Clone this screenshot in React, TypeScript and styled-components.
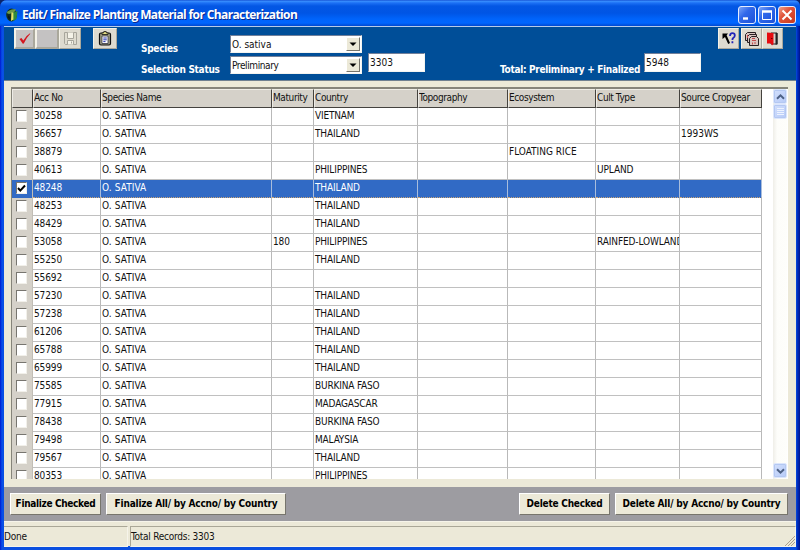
import React from "react";
import styled, { createGlobalStyle, css } from "styled-components";

const GlobalStyle = createGlobalStyle`
  * { box-sizing: border-box; }
  body { margin: 0; background: #0a246a; }
`;

const Window = styled.div`
  width: 800px;
  height: 550px;
  display: flex;
  flex-direction: column;
  overflow: hidden;
  background: linear-gradient(90deg, #0019cf 0, #0850ea 2px, #0a4fe0 4px, #0a4fe0 796px, #0034c8 797px, #00138c 800px);
  border-radius: 7px 6px 0 0;
  font-family: "DejaVu Sans Condensed", "DejaVu Sans", sans-serif;
  font-stretch: condensed;
  font-size: 10px;
  color: #111;
  white-space: nowrap;
`;

const TitleBar = styled.header`
  height: 26px;
  flex: none;
  display: flex;
  align-items: center;
  padding: 3px 4px 0 6px;
  background: linear-gradient(180deg, #0a3fc8 0, #3c92ff 1px, #1c70f5 3px, #0457e4 6px, #0055e5 13px, #0064fb 19px, #0066ff 23px, #0048d0 26px);
`;

const Title = styled.h1`
  margin: 0 auto 0 4px;
  font: bold 12px/16px "Open Sans", "Noto Sans", sans-serif;
  letter-spacing: -0.62px;
  color: #fff;
  text-shadow: 1px 1px 0 #0a2a90;
`;

const CaptionButton = styled.button<{ $close?: boolean }>`
  width: 18px;
  height: 18px;
  margin-left: 2px;
  padding: 0;
  border: 1px solid #e4ecff;
  border-radius: 3px;
  display: grid;
  place-items: center;
  background: ${(p) =>
    p.$close
      ? "linear-gradient(135deg, #f0a088, #e0533a 40%, #c8391c)"
      : "linear-gradient(135deg, #7ba4f8, #3068ea 40%, #1c50d8)"};
`;

const Client = styled.main`
  flex: 1;
  min-height: 0;
  margin: 0 4px 4px;
  display: flex;
  flex-direction: column;
  background: #ece9d8;
`;

const Toolbar = styled.section`
  height: 55px;
  flex: none;
  display: flex;
  align-items: flex-start;
  border-top: 1px solid #b8cce8;
  border-bottom: 1px solid #708090;
  background: #004e98;
`;

const ToolGroup = styled.div<{ $ml: number }>`
  display: flex;
  margin: 1px 0 0 ${(p) => p.$ml}px;
`;

const ToolButton = styled.button<{ $w?: number; $grey?: boolean; $gap?: number }>`
  width: ${(p) => p.$w ?? 22}px;
  height: 21px;
  margin-left: ${(p) => p.$gap ?? 0}px;
  padding: 0;
  display: grid;
  place-items: center;
  border: ${(p) => (p.$grey ? 2 : 1)}px solid;
  border-color: #f4f2e8 #aaa89c #aaa89c #f4f2e8;
  background: ${(p) => (p.$grey ? "#c4c2c2" : "#dedbd0")};
`;

const FieldGrid = styled.div`
  display: grid;
  grid-template-columns: 89px 132px;
  grid-template-rows: 18px 18px;
  row-gap: 3px;
  margin: 8px 0 0 24px;
`;

const Label = styled.label`
  padding-top: 6px;
  font-weight: bold;
  line-height: 16px;
  letter-spacing: -0.28px;
  color: #fff;
`;

const sunken = css`
  border: 1px solid;
  border-color: #72809a #f4f4f0 #f4f4f0 #72809a;
  background: #fff;
`;

const Select = styled.div`
  ${sunken}
  height: 18px;
  display: flex;
  justify-content: space-between;
  padding: 1px 1px 1px 1px;
  line-height: 15px;
`;

const SelectText = styled.span<{ $ls: number }>`
  letter-spacing: ${(p) => p.$ls}px;
`;

const DropButton = styled.span`
  width: 14px;
  height: 14px;
  display: grid;
  place-items: center;
  background: #ece9d8;
  border: 1px solid;
  border-color: #fff #77756c #77756c #fff;
`;

const NumberBox = styled.div<{ $ml: number }>`
  ${sunken}
  width: 57px;
  height: 19px;
  margin: 26px 0 0 ${(p) => p.$ml}px;
  padding-left: 1px;
  line-height: 17px;
`;

const TotalLabel = styled.div`
  width: 144px;
  margin: 35px 0 0 75px;
  font-weight: bold;
  line-height: 16px;
  letter-spacing: -0.3px;
  color: #fff;
`;

const RightSide = styled.div`
  display: flex;
`;

const GridFrame = styled.section`
  height: 392px;
  flex: none;
  margin: 6px 8px 0 7px;
  display: flex;
  overflow: hidden;
  border: 1px solid;
  border-width: 2px 0 0 1px;
  border-color: #86847a #fff #fff #86847a;
  background: #fff;
`;

const Table = styled.div`
  width: 750px;
  flex: none;
`;

const Row = styled.div<{ $selected?: boolean; $head?: boolean }>`
  display: grid;
  grid-template-columns: 21px 68px 171px 42px 104px 90px 88px 84px 82px;
  height: ${(p) => (p.$head ? 19 : 18)}px;
  ${(p) =>
    p.$selected &&
    css`
      background: #316ac5;
      color: #fff;
      box-shadow: 0 -1px 0 #77777a;
    `}
`;

const HeadCell = styled.div`
  line-height: 16px;
  letter-spacing: -0.4px;
  background: #d5d1c9;
  border: 1px solid;
  border-color: #eeece6 #44423e #44423e #eeece6;
  overflow: hidden;
`;

const Cell = styled.div<{ $selected?: boolean; $ls: number }>`
  padding: 0 0 0 1px;
  overflow: hidden;
  line-height: 15px;
  letter-spacing: ${(p) => p.$ls}px;
  border-right: 1px solid ${(p) => (p.$selected ? "#a9bddc" : "#b9b9b9")};
  border-bottom: 1px ${(p) => (p.$selected ? "dotted #c9a477" : "solid #c0c0c0")};
`;

const CheckCell = styled.div<{ $selected?: boolean }>`
  padding: 2px 0 0 4px;
  background: ${(p) => (p.$selected ? "#316ac5" : "#d5d1c9")};
  border-right: 1px solid #c2beb6;
`;

const CheckBox = styled.span`
  width: 11px;
  height: 12px;
  display: grid;
  place-items: center;
  background: #fff;
  border: 1px solid;
  border-color: #77756f #f2f0ea #f2f0ea #77756f;
`;

const ScrollBar = styled.div`
  width: 14px;
  margin-left: auto;
  margin-right: 1px;
  display: flex;
  flex-direction: column;
  background: linear-gradient(90deg, #efeee8, #fdfdfa 30%, #fefefb);
`;

const ScrollPart = styled.div<{ $bottom?: boolean }>`
  height: 15px;
  flex: none;
  margin-top: ${(p) => (p.$bottom ? "auto" : "0")};
  margin-bottom: ${(p) => (p.$bottom ? "1px" : "0")};
  display: grid;
  place-items: center;
  border: 1px solid #dce6fc;
  border-radius: 2px;
  background: linear-gradient(135deg, #d2dffc, #b7cbf8);
  box-shadow: inset 0 0 0 1px #b4c8f2;
`;

const ActionBar = styled.footer`
  height: 34px;
  flex: none;
  margin-top: 8px;
  display: flex;
  align-items: flex-start;
  padding: 6px 8px 0 6px;
  background: #9d9ca1;
`;

const ActionButton = styled.button<{ $w: number; $ml?: string; $ls: number }>`
  width: ${(p) => p.$w}px;
  height: 22px;
  margin-left: ${(p) => p.$ml ?? "0"};
  padding: 0 0 1px;
  font: inherit;
  font-weight: bold;
  letter-spacing: ${(p) => p.$ls}px;
  color: #000;
  border: 1px solid;
  border-color: #fff #77756c #77756c #fff;
  background: #ece9d8;
`;

const StatusBar = styled.div`
  flex: 1;
  display: flex;
  padding-top: 4px;
  border-top: 1px solid #f6f4ea;
`;

const StatusPane = styled.div<{ $w?: number }>`
  ${(p) => (p.$w ? `width: ${p.$w}px;` : "flex: 1;")}
  margin-right: ${(p) => (p.$w ? 2 : 0)}px;
  line-height: 19px;
  letter-spacing: -0.25px;
  border: 1px solid;
  border-width: 1px 1px 1px ${(p) => (p.$w ? 0 : 1)}px;
  border-color: #aaa797 #f6f4ea #f6f4ea #aaa797;
  display: flex;
  justify-content: space-between;
  align-items: flex-end;
`;

const DownArrow = () => (
  <svg width="8" height="5"><path d="M0.5 0.5h7l-3.5 3.5z" fill="#000" /></svg>
);

const Chevron = ({ up }: { up?: boolean }) => (
  <svg width="9" height="8" fill="none" stroke="#4d6185" strokeWidth="2">
    <path d={up ? "M1 5.7 4.5 2.3 8 5.7" : "M1 2.3 4.5 5.7 8 2.3"} />
  </svg>
);

const AppIcon = () => (
  <svg width="12" height="14" viewBox="0 0 12 14">
    <ellipse cx="5.5" cy="7" rx="5.3" ry="6.5" fill="#12301f" />
    <path d="M.5 5Q4 .5 10 1.5L8 4.5 3 6z" fill="#6e9a48" />
    <path d="M6 5 11.5 3 10.5 11 7 13z" fill="#2f8a3e" />
    <path d="M5.4 4.5h2v7L5 13z" fill="#e6e36a" />
    <path d="M2 7 4 9 4 12 2 10z" fill="#0a1620" />
  </svg>
);

const TickIcon = () => (
  <svg width="14" height="13" viewBox="0 0 14 13">
    <path d="M1.5 7 3.5 6 5.3 8.6Q8 3.5 12 1.2L12.3 1.7Q8.5 5.5 5.8 11.5L4.8 11.7Z" fill="#d31820" />
  </svg>
);

const DiskIcon = () => (
  <svg width="15" height="15" viewBox="0 0 15 15" fill="none" stroke="#a8a69c">
    <path d="M1.5 1.5h12v12h-11l-1-1z" fill="#dfdcd0" />
    <path d="M4.5 1.5v6h6v-6M4.5 13.5v-4h6v4M8.5 10.5v2" fill="#f5f3e8" />
  </svg>
);

const ClipboardIcon = () => (
  <svg width="14" height="15" viewBox="0 0 14 15">
    <rect x="1.5" y="2" width="11" height="12" rx="1.5" fill="#9c9a80" stroke="#111" strokeWidth="1.2" />
    <path d="M4 3.5V1.8h1.8V.5h2.4v1.3H10v1.7z" fill="#e5df86" stroke="#111" strokeWidth=".8" />
    <path d="M4 5h6v7.5H4z" fill="#fff" stroke="#223" strokeWidth=".7" />
    <path d="M5.3 7h3.5M5.3 8.8h3.5M5.3 10.6h2.2" stroke="#2636b0" />
  </svg>
);

const HelpIcon = () => (
  <svg width="16" height="16" viewBox="0 0 16 16">
    <path d="M1.5 2.5h5.5L5.6 4.3 9 12 7.2 13 4 6 1.5 8z" fill="#000" />
    <path d="M9 5Q9 2.2 11.4 2.2T13.8 4.5Q13.8 6 12.2 7 11.4 7.6 11.4 9M11.4 10.3v2" fill="none" stroke="#2225b8" strokeWidth="1.8" />
  </svg>
);

const CopiesIcon = () => (
  <svg width="16" height="16" viewBox="0 0 16 16" fill="#d9c5c0" stroke="#282022">
    <path d="M3.5 1.5h8v8h-10v-6z" />
    <path d="M5.5 3.5h7v8h-9v-6z" />
    <path d="M7.5 5.5h5l2 2v7h-9v-7z" />
    <path d="M8 7.5h3M8 9.5h4M8.5 11.5v2M11 11v2M3.5 4v3" stroke="#c34a4a" />
  </svg>
);

const DoorIcon = () => (
  <svg width="15" height="15" viewBox="0 0 15 15">
    <path d="M6 2h6v11H6z" fill="#d5d1c9" stroke="#222" />
    <path d="M11.5 2v11.5" stroke="#222" strokeWidth="2" />
    <path d="M2 1.5 8.5 2v11L7 14.5 6 12.5H2z" fill="#e50c10" />
    <path d="M6 7.5h1.5" stroke="#650000" />
  </svg>
);

const columns = ["Acc No", "Species Name", "Maturity", "Country", "Topography", "Ecosystem", "Cult Type", "Source Cropyear"];

const cellSpacing = [-0.1, 0.1, -0.1, -0.17, 0, 0, -0.12, 0];

type Accession = { acc: string; country?: string; maturity?: string; eco?: string; cult?: string; year?: string };

const accessions: Accession[] = [
  { acc: "30258", country: "VIETNAM" },
  { acc: "36657", country: "THAILAND", year: "1993WS" },
  { acc: "38879", eco: "FLOATING RICE" },
  { acc: "40613", country: "PHILIPPINES", cult: "UPLAND" },
  { acc: "48248", country: "THAILAND" },
  { acc: "48253", country: "THAILAND" },
  { acc: "48429", country: "THAILAND" },
  { acc: "53058", country: "PHILIPPINES", maturity: "180", cult: "RAINFED-LOWLAND" },
  { acc: "55250", country: "THAILAND" },
  { acc: "55692" },
  { acc: "57230", country: "THAILAND" },
  { acc: "57238", country: "THAILAND" },
  { acc: "61206", country: "THAILAND" },
  { acc: "65788", country: "THAILAND" },
  { acc: "65999", country: "THAILAND" },
  { acc: "75585", country: "BURKINA FASO" },
  { acc: "77915", country: "MADAGASCAR" },
  { acc: "78438", country: "BURKINA FASO" },
  { acc: "79498", country: "MALAYSIA" },
  { acc: "79567", country: "THAILAND" },
  { acc: "80353", country: "PHILIPPINES" },
];

export default function App() {
  return (
    <>
      <GlobalStyle />
      <Window>
        <TitleBar>
          <AppIcon />
          <Title>Edit/ Finalize Planting Material for Characterization</Title>
          <CaptionButton>
            <svg width="12" height="12"><path d="M2 9.5h5" stroke="#fff" strokeWidth="2.4" /></svg>
          </CaptionButton>
          <CaptionButton>
            <svg width="12" height="12" fill="none" stroke="#fff"><path d="M1.5 2v8.5h9V2" /><path d="M1 2.5h10" strokeWidth="2.4" /></svg>
          </CaptionButton>
          <CaptionButton $close>
            <svg width="12" height="12"><path d="M1.5 1.5l9 9M10.5 1.5l-9 9" stroke="#fff" strokeWidth="2" /></svg>
          </CaptionButton>
        </TitleBar>
        <Client>
          <Toolbar>
            <ToolGroup $ml={10}>
              <ToolButton $grey $w={21}><TickIcon /></ToolButton>
              <ToolButton $grey $w={24} />
              <ToolButton $w={22}><DiskIcon /></ToolButton>
              <ToolButton $w={24} $gap={12}><ClipboardIcon /></ToolButton>
            </ToolGroup>
            <FieldGrid>
              <Label>Species</Label>
              <Select><SelectText $ls={0}>O. sativa</SelectText><DropButton><DownArrow /></DropButton></Select>
              <Label>Selection Status</Label>
              <Select><SelectText $ls={-0.4}>Preliminary</SelectText><DropButton><DownArrow /></DropButton></Select>
            </FieldGrid>
            <NumberBox $ml={6}>3303</NumberBox>
            <TotalLabel>Total: Preliminary + Finalized</TotalLabel>
            <RightSide>
              <NumberBox $ml={0}>5948</NumberBox>
              <ToolGroup $ml={17}>
                <ToolButton $w={21}><HelpIcon /></ToolButton>
                <ToolButton $w={21} $gap={2}><CopiesIcon /></ToolButton>
                <ToolButton $w={21}><DoorIcon /></ToolButton>
              </ToolGroup>
            </RightSide>
          </Toolbar>
          <GridFrame>
            <Table>
              <Row $head>
                <HeadCell />
                {columns.map((name) => <HeadCell key={name}>{name}</HeadCell>)}
              </Row>
              {accessions.map((a) => {
                const selected = a.acc === "48248";
                return (
                  <Row key={a.acc} $selected={selected}>
                    <CheckCell $selected={selected}>
                      <CheckBox>
                        {selected && (
                          <svg width="9" height="9"><path d="M1 4l2.3 2.6L8 1.5" fill="none" stroke="#000" strokeWidth="2" /></svg>
                        )}
                      </CheckBox>
                    </CheckCell>
                    {[a.acc, "O. SATIVA", a.maturity, a.country, "", a.eco, a.cult, a.year].map((value, i) => (
                      <Cell key={i} $selected={selected} $ls={cellSpacing[i]}>{value}</Cell>
                    ))}
                  </Row>
                );
              })}
            </Table>
            <ScrollBar>
              <ScrollPart><Chevron up /></ScrollPart>
              <ScrollPart>
                <svg width="7" height="8"><path d="M0 .5h7M0 2.5h7M0 4.5h7M0 6.5h7" stroke="#edf3ff" /></svg>
              </ScrollPart>
              <ScrollPart $bottom><Chevron /></ScrollPart>
            </ScrollBar>
          </GridFrame>
          <ActionBar>
            <ActionButton $w={91} $ls={-0.33}>Finalize Checked</ActionButton>
            <ActionButton $w={180} $ml="5px" $ls={-0.2}>Finalize All/ by Accno/ by Country</ActionButton>
            <ActionButton $w={91} $ml="auto" $ls={-0.22}>Delete Checked</ActionButton>
            <ActionButton $w={173} $ml="5px" $ls={-0.17}>Delete All/ by Accno/ by Country</ActionButton>
          </ActionBar>
          <StatusBar>
            <StatusPane $w={124}>Done</StatusPane>
            <StatusPane>
              Total Records: 3303
              <svg width="11" height="11" stroke="#aca08c"><path d="M1 11 11 1M4 11 11 4M7 11 11 7" /></svg>
            </StatusPane>
          </StatusBar>
        </Client>
      </Window>
    </>
  );
}
